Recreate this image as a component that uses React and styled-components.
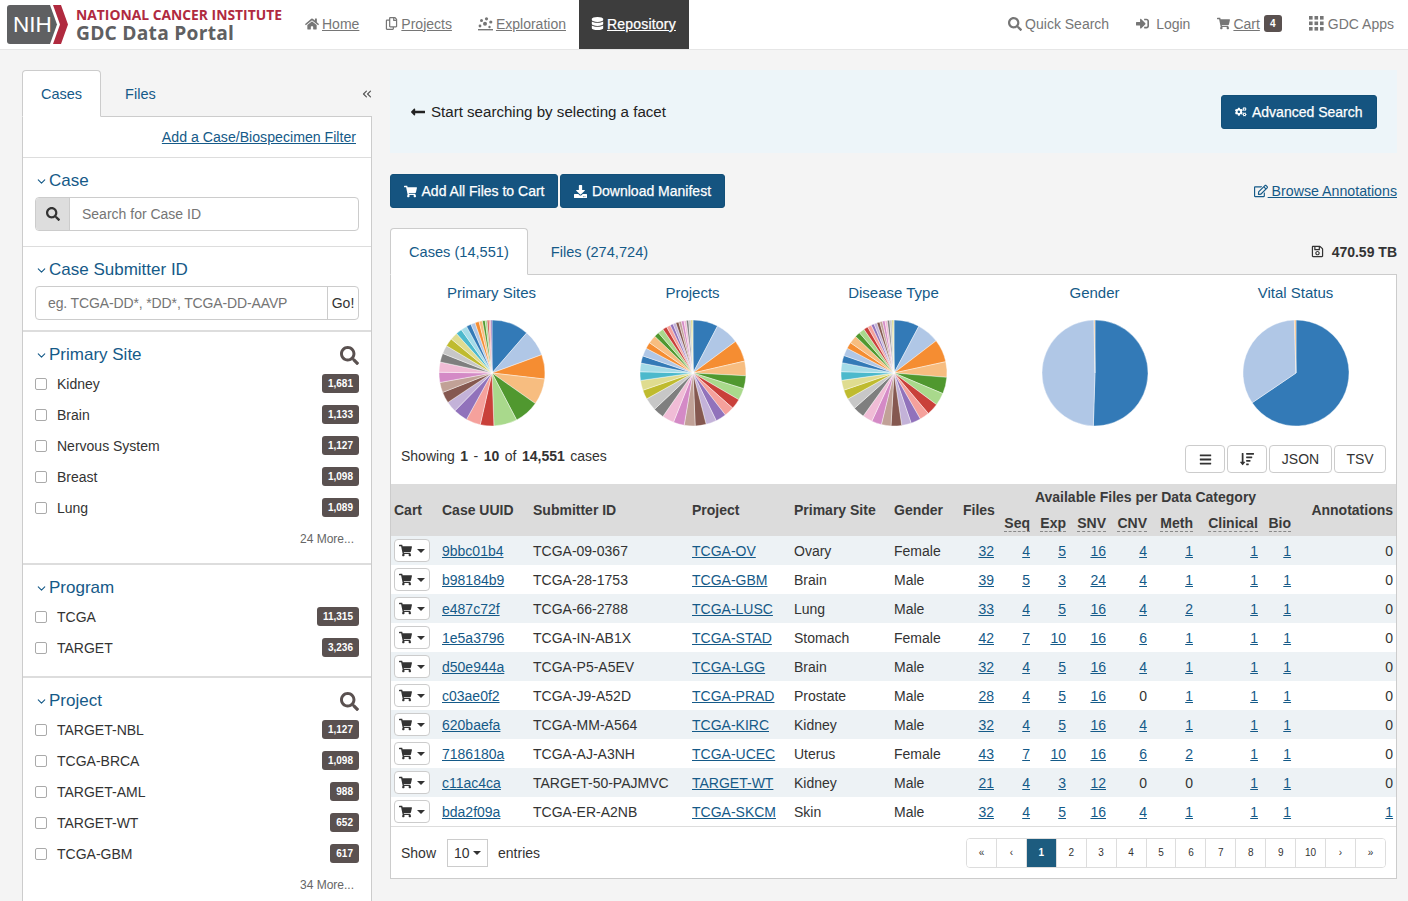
import React from "react";
import styled, { createGlobalStyle } from "styled-components";
import {
  FaHome,
  FaRegCopy,
  FaDatabase,
  FaSearch,
  FaSignInAlt,
  FaShoppingCart,
  FaCogs,
  FaDownload,
  FaRegEdit,
  FaRegSave,
  FaBars,
  FaSortAmountDown,
  FaLongArrowAltLeft,
} from "react-icons/fa";
import { ChevronDown, ChevronsLeft } from "lucide-react";

const BLUE = "#155a88";
const TEXT = "#333";
const TABLEAU = [
  "#337ab7", "#b0c7e6", "#f58d32", "#f7bd80", "#50982f", "#a9d98c", "#c9403a", "#f5a19c", "#9172bb", "#c3b2d8",
  "#855850", "#c1a197", "#d48ac6", "#f0bcd6", "#7f7f7f", "#c7c7c7", "#bfbb2f", "#dfdc90", "#4cb9cc", "#a5dce8",
];

const PIES = [
  {
    title: "Primary Sites",
    data: [11, 7.8, 7.2, 7.7, 7.3, 6.9, 4, 4.3, 4.2, 3.2, 3.3, 3, 3, 3, 2.6, 2.5, 2.4, 2.2, 1.8, 1.8, 1.4, 1.3, 1.2, 1, 0.8, 0.6, 0.5, 0.5, 0.4],
  },
  {
    title: "Projects",
    data: [7.6, 7.1, 6.5, 4.4, 3.9, 3.6, 3.1, 3, 3.2, 3.2, 3.3, 3.3, 3.3, 3.6, 3.3, 3.9, 2.8, 3, 2.6, 2.6, 2.2, 2.5, 1.9, 2.5, 1.5, 1.7, 1.3, 1.2, 0.9, 0.9, 0.9, 0.8, 0.8, 0.7, 0.7, 0.7, 0.3, 0.3],
  },
  {
    title: "Disease Type",
    data: [7.7, 6.8, 6.9, 4.7, 5, 3.8, 3.6, 2.9, 3, 2.9, 3.2, 2.9, 3, 3, 3.5, 3.4, 2.9, 3, 2.6, 2.7, 2.2, 2.4, 1.9, 2.4, 1.6, 1.7, 1.3, 1.2, 0.9, 0.9, 0.9, 0.8, 0.8, 0.7, 0.7, 0.7, 0.3, 0.3],
  },
  { title: "Gender", data: [50.5, 49.2, 0, 0.3] },
  { title: "Vital Status", data: [65.5, 34, 0, 0.5] },
];

const ROWS = [
  ["9bbc01b4", "TCGA-09-0367", "TCGA-OV", "Ovary", "Female", 32, 4, 5, 16, 4, 1, 1, 1, 0],
  ["b98184b9", "TCGA-28-1753", "TCGA-GBM", "Brain", "Male", 39, 5, 3, 24, 4, 1, 1, 1, 0],
  ["e487c72f", "TCGA-66-2788", "TCGA-LUSC", "Lung", "Male", 33, 4, 5, 16, 4, 2, 1, 1, 0],
  ["1e5a3796", "TCGA-IN-AB1X", "TCGA-STAD", "Stomach", "Female", 42, 7, 10, 16, 6, 1, 1, 1, 0],
  ["d50e944a", "TCGA-P5-A5EV", "TCGA-LGG", "Brain", "Male", 32, 4, 5, 16, 4, 1, 1, 1, 0],
  ["c03ae0f2", "TCGA-J9-A52D", "TCGA-PRAD", "Prostate", "Male", 28, 4, 5, 16, 0, 1, 1, 1, 0],
  ["620baefa", "TCGA-MM-A564", "TCGA-KIRC", "Kidney", "Male", 32, 4, 5, 16, 4, 1, 1, 1, 0],
  ["7186180a", "TCGA-AJ-A3NH", "TCGA-UCEC", "Uterus", "Female", 43, 7, 10, 16, 6, 2, 1, 1, 0],
  ["c11ac4ca", "TARGET-50-PAJMVC", "TARGET-WT", "Kidney", "Male", 21, 4, 3, 12, 0, 0, 1, 1, 0],
  ["bda2f09a", "TCGA-ER-A2NB", "TCGA-SKCM", "Skin", "Male", 32, 4, 5, 16, 4, 1, 1, 1, 1],
];

const COLS = [48, 91, 159, 102, 100, 69, 37, 36, 36, 40, 41, 46, 65, 33, 102];
const CATEGORIES = ["Seq", "Exp", "SNV", "CNV", "Meth", "Clinical", "Bio"];
const PAGES = ["«", "‹", "1", "2", "3", "4", "5", "6", "7", "8", "9", "10", "›", "»"];

const FACETS = [
  { title: "Primary Site", search: true, more: "24 More...", items: [["Kidney", "1,681"], ["Brain", "1,133"], ["Nervous System", "1,127"], ["Breast", "1,098"], ["Lung", "1,089"]] },
  { title: "Program", items: [["TCGA", "11,315"], ["TARGET", "3,236"]] },
  { title: "Project", search: true, more: "34 More...", items: [["TARGET-NBL", "1,127"], ["TCGA-BRCA", "1,098"], ["TARGET-AML", "988"], ["TARGET-WT", "652"], ["TCGA-GBM", "617"]] },
];

const GlobalStyle = createGlobalStyle`
  html, body {
    margin: 0;
    padding: 0;
    background: #f4f4f4;
    color: ${TEXT};
    font-family: "Liberation Sans", Arial, sans-serif;
    font-size: 14px;
  }
  * { box-sizing: border-box; }
`;

const Page = styled.div`
  height: 901px;
  overflow: hidden;
`;

const Header = styled.header`
  display: flex;
  align-items: stretch;
  height: 50px;
  background: #fff;
  border-bottom: 1px solid #e6e6e6;
`;

const Logo = styled.div`
  display: flex;
  align-items: flex-start;
  width: 292px;
  padding: 5px 0 0 7px;
  flex: none;
`;

const LogoMark = styled.div`
  position: relative;
  width: 61px;
  height: 39px;
  flex: none;
`;

const LogoNih = styled.span`
  position: absolute;
  left: 6px;
  top: 9px;
  color: #fff;
  font-size: 22.5px;
  line-height: 22px;
`;

const LogoText = styled.div`
  margin-left: 8px;
  padding-top: 3px;
  white-space: nowrap;
`;

const LogoInstitute = styled.div`
  color: #b02a3f;
  font-family: "Open Sans", sans-serif;
  font-weight: 700;
  font-size: 13.85px;
  line-height: 14px;
`;

const LogoPortal = styled.div`
  color: #5f6062;
  font-family: "Open Sans", sans-serif;
  font-weight: 700;
  font-size: 19.2px;
  line-height: 22px;
  letter-spacing: 0.25px;
`;

const NavItem = styled.a`
  display: flex;
  align-items: center;
  gap: ${(p) => p.$gap || 3}px;
  padding: 0 ${(p) => p.$padR || 13}px 2px ${(p) => p.$padL || 13}px;
  color: ${(p) => (p.$active ? "#fff" : "#767676")};
  background: ${(p) => (p.$active ? "#3d3d3d" : "transparent")};
  letter-spacing: ${(p) => (p.$active ? "0.2px" : "0")};
  -webkit-text-stroke: ${(p) => (p.$active ? "0.25px #fff" : "0")};
  white-space: nowrap;
  svg { flex: none; }
`;

const NavLabel = styled.span`
  text-decoration: ${(p) => (p.$plain ? "none" : "underline")};
`;

const NavRight = styled.div`
  display: flex;
  margin-left: auto;
  padding-right: 1px;
`;

const CartBadge = styled.span`
  margin-left: 1px;
  background: #5a5150;
  color: #fff;
  font-size: 10px;
  font-weight: 700;
  line-height: 17px;
  width: 18px;
  height: 17px;
  text-align: center;
  border-radius: 3px;
`;

const Body = styled.div`
  display: flex;
  align-items: flex-start;
  gap: 18px;
  padding: 20px 11px 0 22px;
`;

const Sidebar = styled.aside`
  width: 350px;
  flex: none;
`;

const SideTabs = styled.div`
  display: flex;
  align-items: flex-end;
  height: 47px;
  margin-bottom: -1px;
  position: relative;
`;

const SideTab = styled.div`
  height: 47px;
  line-height: 46px;
  padding: 0 ${(p) => (p.$active ? 18 : 23)}px;
  color: ${BLUE};
  font-size: 14.5px;
  background: ${(p) => (p.$active ? "#fff" : "transparent")};
  border: 1px solid ${(p) => (p.$active ? "#ccc" : "transparent")};
  border-bottom: 1px solid ${(p) => (p.$active ? "#fff" : "transparent")};
  border-radius: 4px 4px 0 0;
  z-index: 1;
`;

const Collapse = styled.span`
  margin-left: auto;
  margin-right: -2px;
  align-self: center;
  display: flex;
  color: #555;
`;

const SideBody = styled.div`
  background: #fff;
  border: 1px solid #ccc;
  border-bottom: 0;
  height: 800px;
`;

const FilterLink = styled.div`
  height: 41px;
  padding: 12px 15px 0 0;
  text-align: right;
  color: ${BLUE};
  font-size: 14.15px;
  text-decoration: underline;
  line-height: 17px;
  border-bottom: 1px solid #ddd;
`;

const Section = styled.section`
  height: ${(p) => p.$h}px;
  padding: 12px 12px 0 12px;
  border-bottom: ${(p) => p.$line || 1}px solid #ddd;
`;

const SectionTitle = styled.div`
  display: flex;
  align-items: center;
  height: 22px;
  color: ${BLUE};
  font-size: 17px;
  svg.chev { margin-right: 1px; }
`;

const TitleSearch = styled.span`
  margin-left: auto;
  color: #5a5150;
  display: flex;
`;

const InputGroup = styled.div`
  display: flex;
  height: 34px;
  margin-top: 5px;
  border: 1px solid #ccc;
  border-radius: 4px;
  overflow: hidden;
`;

const InputAddon = styled.span`
  width: 34px;
  display: flex;
  align-items: center;
  justify-content: center;
  background: #ddd;
  border-right: 1px solid #ccc;
  color: #333;
`;

const Placeholder = styled.span`
  flex: 1;
  line-height: 32px;
  padding-left: 12px;
  color: #757575;
  letter-spacing: ${(p) => (p.$tight ? "-0.13px" : "0")};
`;

const GoButton = styled.span`
  width: 31px;
  text-align: center;
  line-height: 32px;
  border-left: 1px solid #ccc;
`;

const FacetRow = styled.div`
  display: flex;
  align-items: center;
  height: 31px;
`;

const Check = styled.span`
  width: 12px;
  height: 12px;
  border: 1px solid #aaa;
  border-radius: 2px;
  background: #fff;
  margin-right: 10px;
`;

const Count = styled.span`
  margin-left: auto;
  height: 19px;
  line-height: 19px;
  padding: 0 6px;
  border-radius: 3px;
  background: #5a5150;
  color: #fff;
  font-size: 10px;
  font-weight: 700;
`;

const More = styled.div`
  text-align: right;
  padding: 8px 5px 0 0;
  font-size: 12px;
  line-height: 16px;
  color: #666;
`;

const FacetRows = styled.div`
  margin-top: 2px;
`;

const Main = styled.main`
  flex: 1;
  min-width: 0;
`;

const Alert = styled.div`
  display: flex;
  align-items: center;
  height: 83px;
  padding: 0 20px;
  background: #edf5f9;
  color: #222;
  font-size: 15.1px;
  svg { margin-right: 5px; }
`;

const Button = styled.button`
  display: inline-flex;
  align-items: center;
  justify-content: center;
  gap: 5px;
  height: 34px;
  width: ${(p) => p.$w}px;
  padding: 0;
  border: 1px solid #124f78;
  border-radius: 3px;
  background: #155480;
  color: #fff;
  font: 14px "Liberation Sans", Arial, sans-serif;
  -webkit-text-stroke: 0.25px #fff;
`;

const AlertButton = styled(Button)`
  margin-left: auto;
  svg { margin-right: 0; }
`;

const Actions = styled.div`
  display: flex;
  align-items: center;
  gap: 2px;
  margin-top: 21px;
`;

const Browse = styled.a`
  margin-left: auto;
  color: ${BLUE};
  font-size: 14.2px;
  display: flex;
  align-items: center;
  span { text-decoration: underline; white-space: pre; }
`;

const ResultTabs = styled.div`
  display: flex;
  align-items: center;
  height: 47px;
  margin-top: 20px;
  margin-bottom: -1px;
`;

const ResultTab = styled.div`
  height: 47px;
  line-height: 47px;
  padding: 0 ${(p) => (p.$active ? 18 : 22)}px;
  color: ${BLUE};
  background: ${(p) => (p.$active ? "#fff" : "transparent")};
  border: 1px solid ${(p) => (p.$active ? "#ccc" : "transparent")};
  border-bottom: 1px solid ${(p) => (p.$active ? "#fff" : "transparent")};
  border-radius: 4px 4px 0 0;
  font-size: 14.6px;
  z-index: 1;
`;

const Size = styled.div`
  margin-left: auto;
  display: flex;
  align-items: center;
  gap: 8px;
  font-weight: 700;
`;

const Panel = styled.div`
  background: #fff;
  border: 1px solid #ccc;
  height: 605px;
`;

const Charts = styled.div`
  display: grid;
  grid-template-columns: repeat(5, 1fr);
  padding-top: 8px;
`;

const Chart = styled.div`
  text-align: center;
  svg { display: block; margin: 0 auto; }
`;

const ChartTitle = styled.div`
  color: ${BLUE};
  font-size: 15px;
  line-height: 20px;
  margin-bottom: 16px;
`;

const Summary = styled.div`
  display: flex;
  align-items: flex-start;
  height: 28px;
  margin-top: 18px;
  padding: 0 10px;
`;

const SummaryText = styled.span`
  line-height: 22px;
  b { margin: 0 5.5px; }
`;

const Tools = styled.div`
  margin-left: auto;
  display: flex;
  gap: 2px;
`;

const ToolButton = styled.span`
  display: flex;
  align-items: center;
  justify-content: center;
  width: ${(p) => p.$w}px;
  height: 28px;
  border: 1px solid #ccc;
  border-radius: 4px;
  color: #333;
`;

const Table = styled.table`
  width: 1005px;
  margin-top: 11px;
  table-layout: fixed;
  border-collapse: collapse;
`;

const Th = styled.th`
  background: #dcdcdc;
  padding: 0 3px;
  text-align: ${(p) => p.$align || "left"};
  font-size: 14px;
  color: #3a3a3a;
  white-space: nowrap;
  height: 26px;
`;

const CategoryLabel = styled.span`
  display: inline-block;
  line-height: 16px;
  border-bottom: 1px dashed #888;
`;

const Tr = styled.tr`
  background: ${(p) => (p.$odd ? "#edf2f5" : "#fff")};
`;

const Td = styled.td`
  height: 29px;
  padding: 0 3px;
  white-space: nowrap;
  text-align: ${(p) => p.$align || "left"};
`;

const CellLink = styled.a`
  color: ${BLUE};
  text-decoration: underline;
`;

const CartButton = styled.span`
  display: flex;
  align-items: center;
  justify-content: center;
  gap: 5px;
  width: 36px;
  height: 23px;
  border: 1px solid #ccc;
  border-radius: 4px;
  background: #fff;
  color: #333;
`;

const Caret = styled.i`
  width: 0;
  height: 0;
  border-left: 4px solid transparent;
  border-right: 4px solid transparent;
  border-top: 4px solid currentColor;
`;

const Footer = styled.div`
  display: flex;
  align-items: center;
  height: 52px;
  padding: 0 10px;
  border-top: 1px solid #ddd;
`;

const PageSize = styled.span`
  display: flex;
  align-items: center;
  gap: 3px;
  width: 41px;
  height: 28px;
  margin: 0 10px 0 11px;
  padding-left: 6px;
  border: 1px solid #ccc;
`;

const Pager = styled.div`
  display: flex;
  width: 420px;
  margin-left: auto;
  border: 1px solid #ddd;
  border-radius: 4px;
  overflow: hidden;
`;

const PagerCell = styled.span`
  flex: 1;
  height: 28px;
  line-height: 28px;
  text-align: center;
  font-size: 10px;
  border-left: ${(p) => (p.$first ? 0 : 1)}px solid #ddd;
  background: ${(p) => (p.$active ? "#1d5c7f" : "#fff")};
  color: ${(p) => (p.$active ? "#fff" : "#333")};
  font-weight: ${(p) => (p.$active ? 700 : 400)};
`;

const Pie = ({ data }) => {
  const total = data.reduce((a, b) => a + b, 0);
  let angle = 0;
  const r = 53;
  return (
    <svg width="108" height="108" viewBox="-54 -54 108 108">
      {data.map((value, i) => {
        if (!value) return null;
        const start = angle;
        angle += (value / total) * Math.PI * 2;
        const large = angle - start > Math.PI ? 1 : 0;
        const d = `M0 0L${r * Math.sin(start)} ${-r * Math.cos(start)}A${r} ${r} 0 ${large} 1 ${r * Math.sin(angle)} ${-r * Math.cos(angle)}Z`;
        return <path key={i} d={d} fill={TABLEAU[i % 20]} stroke="#fff" strokeWidth="0.4" />;
      })}
    </svg>
  );
};

const NihMark = () => (
  <svg width="61" height="39" viewBox="0 0 61 39">
    <path d="M3 0H43L50 19.5L43 39H3Q0 39 0 36V3Q0 0 3 0Z" fill="#5f6062" />
    <path d="M46 0H54L61 19.5L54 39H46L53 19.5Z" fill="#b02a3f" />
  </svg>
);

const ExplorationIcon = () => (
  <svg width="15" height="14" viewBox="0 0 15 14" fill="currentColor">
    <circle cx="3.5" cy="3.5" r="1.5" />
    <circle cx="8.5" cy="1.8" r="1.6" />
    <circle cx="12.8" cy="5" r="1.6" />
    <circle cx="7" cy="6.8" r="2" />
    <circle cx="2" cy="9" r="1.4" />
    <circle cx="11.5" cy="10" r="1.2" />
    <rect x="0" y="12" width="15" height="1.4" />
  </svg>
);

const GridIcon = () => (
  <svg width="15" height="15" viewBox="0 0 15 15" fill="currentColor">
    {[0, 5.5, 11].flatMap((y) =>
      [0, 5.5, 11].map((x) => <rect key={`${x}-${y}`} x={x} y={y} width="3.6" height="3.6" />)
    )}
  </svg>
);

const TitleChevron = () => <ChevronDown className="chev" size={13} strokeWidth={2} />;

const Facet = ({ facet, height, line }) => (
  <Section $h={height} $line={line}>
    <SectionTitle>
      <TitleChevron />
      {facet.title}
      {facet.search && (
        <TitleSearch>
          <FaSearch size={19} />
        </TitleSearch>
      )}
    </SectionTitle>
    <FacetRows>
      {facet.items.map(([name, count]) => (
        <FacetRow key={name}>
          <Check />
          {name}
          <Count>{count}</Count>
        </FacetRow>
      ))}
    </FacetRows>
    {facet.more && <More>{facet.more}</More>}
  </Section>
);

const Num = ({ value }) => (
  <Td $align="right">{value === 0 ? 0 : <CellLink>{value}</CellLink>}</Td>
);

export default function App() {
  return (
    <Page>
      <GlobalStyle />
      <Header>
        <Logo>
          <LogoMark>
            <NihMark />
            <LogoNih>NIH</LogoNih>
          </LogoMark>
          <LogoText>
            <LogoInstitute>NATIONAL CANCER INSTITUTE</LogoInstitute>
            <LogoPortal>GDC Data Portal</LogoPortal>
          </LogoText>
        </Logo>
        <NavItem>
          <FaHome size={14} />
          <NavLabel>Home</NavLabel>
        </NavItem>
        <NavItem>
          <FaRegCopy size={13} />
          <NavLabel>Projects</NavLabel>
        </NavItem>
        <NavItem>
          <ExplorationIcon />
          <NavLabel>Exploration</NavLabel>
        </NavItem>
        <NavItem $active $padL={12}>
          <FaDatabase size={13} />
          <NavLabel>Repository</NavLabel>
        </NavItem>
        <NavRight>
          <NavItem $padR={14}>
            <FaSearch size={14} />
            <NavLabel $plain>Quick Search</NavLabel>
          </NavItem>
          <NavItem $gap={7} $padR={14}>
            <FaSignInAlt size={13} />
            <NavLabel $plain>Login</NavLabel>
          </NavItem>
          <NavItem>
            <FaShoppingCart size={13} />
            <NavLabel>Cart</NavLabel>
            <CartBadge>4</CartBadge>
          </NavItem>
          <NavItem $gap={4} $padL={14}>
            <GridIcon />
            <NavLabel $plain>GDC Apps</NavLabel>
          </NavItem>
        </NavRight>
      </Header>

      <Body>
        <Sidebar>
          <SideTabs>
            <SideTab $active>Cases</SideTab>
            <SideTab>Files</SideTab>
            <Collapse>
              <ChevronsLeft size={14} />
            </Collapse>
          </SideTabs>
          <SideBody>
            <FilterLink>Add a Case/Biospecimen Filter</FilterLink>
            <Section $h={89}>
              <SectionTitle>
                <TitleChevron />
                Case
              </SectionTitle>
              <InputGroup>
                <InputAddon>
                  <FaSearch size={14} />
                </InputAddon>
                <Placeholder>Search for Case ID</Placeholder>
              </InputGroup>
            </Section>
            <Section $h={85} $line={2}>
              <SectionTitle>
                <TitleChevron />
                Case Submitter ID
              </SectionTitle>
              <InputGroup>
                <Placeholder $tight>eg. TCGA-DD*, *DD*, TCGA-DD-AAVP</Placeholder>
                <GoButton>Go!</GoButton>
              </InputGroup>
            </Section>
            <Facet facet={FACETS[0]} height={233} line={2} />
            <Facet facet={FACETS[1]} height={113} line={2} />
            <Facet facet={FACETS[2]} height={232} />
          </SideBody>
        </Sidebar>

        <Main>
          <Alert>
            <FaLongArrowAltLeft size={16} />
            Start searching by selecting a facet
            <AlertButton $w={156}>
              <FaCogs size={11.5} />
              Advanced Search
            </AlertButton>
          </Alert>
          <Actions>
            <Button $w={168}>
              <FaShoppingCart size={13} />
              Add All Files to Cart
            </Button>
            <Button $w={165}>
              <FaDownload size={13} />
              Download Manifest
            </Button>
            <Browse>
              <FaRegEdit size={14} />
              <span> Browse Annotations</span>
            </Browse>
          </Actions>
          <ResultTabs>
            <ResultTab $active>Cases (14,551)</ResultTab>
            <ResultTab>Files (274,724)</ResultTab>
            <Size>
              <FaRegSave size={13} />
              470.59 TB
            </Size>
          </ResultTabs>
          <Panel>
            <Charts>
              {PIES.map((pie) => (
                <Chart key={pie.title}>
                  <ChartTitle>{pie.title}</ChartTitle>
                  <Pie data={pie.data} />
                </Chart>
              ))}
            </Charts>
            <Summary>
              <SummaryText>
                Showing<b>1</b>-<b>10</b>of<b>14,551</b>cases
              </SummaryText>
              <Tools>
                <ToolButton $w={40}>
                  <FaBars size={13} />
                </ToolButton>
                <ToolButton $w={40}>
                  <FaSortAmountDown size={14} />
                </ToolButton>
                <ToolButton $w={63}>JSON</ToolButton>
                <ToolButton $w={52}>TSV</ToolButton>
              </Tools>
            </Summary>
            <Table>
              <colgroup>
                {COLS.map((w, i) => (
                  <col key={i} width={w} />
                ))}
              </colgroup>
              <thead>
                <tr>
                  <Th rowSpan={2}>Cart</Th>
                  <Th rowSpan={2}>Case UUID</Th>
                  <Th rowSpan={2}>Submitter ID</Th>
                  <Th rowSpan={2}>Project</Th>
                  <Th rowSpan={2}>Primary Site</Th>
                  <Th rowSpan={2}>Gender</Th>
                  <Th rowSpan={2} $align="right">Files</Th>
                  <Th colSpan={7} $align="center">Available Files per Data Category</Th>
                  <Th rowSpan={2} $align="right">Annotations</Th>
                </tr>
                <tr>
                  {CATEGORIES.map((c) => (
                    <Th key={c} $align="right">
                      <CategoryLabel>{c}</CategoryLabel>
                    </Th>
                  ))}
                </tr>
              </thead>
              <tbody>
                {ROWS.map((row, i) => (
                  <Tr key={row[0]} $odd={i % 2 === 0}>
                    <Td>
                      <CartButton>
                        <FaShoppingCart size={13} />
                        <Caret />
                      </CartButton>
                    </Td>
                    <Td><CellLink>{row[0]}</CellLink></Td>
                    <Td>{row[1]}</Td>
                    <Td><CellLink>{row[2]}</CellLink></Td>
                    <Td>{row[3]}</Td>
                    <Td>{row[4]}</Td>
                    {row.slice(5).map((value, j) => (
                      <Num key={j} value={value} />
                    ))}
                  </Tr>
                ))}
              </tbody>
            </Table>
            <Footer>
              Show
              <PageSize>
                10
                <Caret />
              </PageSize>
              entries
              <Pager>
                {PAGES.map((p, i) => (
                  <PagerCell key={i} $first={i === 0} $active={p === "1"}>
                    {p}
                  </PagerCell>
                ))}
              </Pager>
            </Footer>
          </Panel>
        </Main>
      </Body>
    </Page>
  );
}
